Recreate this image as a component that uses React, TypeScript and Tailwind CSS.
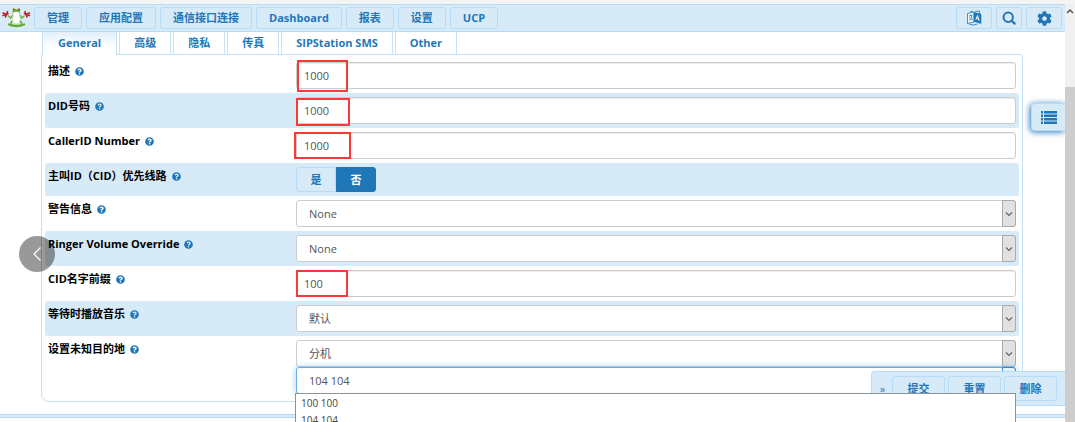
import React, { useState } from "react";
import { FaCog, FaQuestionCircle } from "react-icons/fa";

const menuItems = ["管理", "应用配置", "通信接口连接", "Dashboard", "报表", "设置", "UCP"];

const tabs = ["General", "高级", "隐私", "传真", "SIPStation SMS", "Other"];

const FrogLogo = () => (
  <svg viewBox="0 0 32 20" className="h-5 w-8" aria-hidden="true">
    <g stroke="#c4232a" strokeWidth="1.6" strokeLinecap="round" fill="none">
      <path d="M6.500 6.500L3 5M6.500 6.500L7.500 3.500M6.500 6.500L3 7.500M6.500 6.500L5.500 9M6.500 6.500L8 5.500" />
      <path d="M26 6.500L29.500 5M26 6.500L25 3.500M26 6.500L29.500 7.500M26 6.500L27 9M26 6.500L24.500 5.500" />
    </g>
    <g stroke="#6aa832" fill="none" strokeLinecap="round">
      <path d="M8.500 8L10.500 10L13 7M24 8L22 10L19.500 7" strokeWidth="1.3" />
      <path d="M12.500 13Q10 14.500 11.500 16.500M20 13Q22.500 14.500 21 16.500" strokeWidth="1.5" />
      <path d="M9 16.500Q16.500 19.500 24 16.500" strokeWidth="2.4" />
    </g>
    <path
      d="M13.500 3Q16.500 1.500 19 3L19.500 7Q21.500 12 19 15Q16.500 17 13.500 15Q11 12 13 7Z"
      fill="#fff"
      stroke="#a9cf85"
      strokeWidth="0.6"
    />
    <path d="M12.500 5Q12.500 1.500 16.300 1.500Q20 1.500 20 5Q16.300 2.500 12.500 5Z" fill="#6aa832" />
    <circle cx="14" cy="1.800" r="1.500" fill="#6aa832" />
    <circle cx="18.800" cy="1.800" r="1.500" fill="#6aa832" />
    <circle cx="13.800" cy="1.600" r="0.800" fill="#c4232a" />
    <circle cx="19" cy="1.600" r="0.800" fill="#c4232a" />
  </svg>
);

const LanguageIcon = () => (
  <svg viewBox="0 0 16 16" className="h-4 w-4" fill="none" stroke="#1f77b8" aria-hidden="true">
    <path d="M1.500 3.500L8 2V12L1.500 13.500Z" strokeWidth="0.8" fill="#eef6fc" />
    <path d="M3 6L6.500 5.500M4.700 4.500V6M6 6Q5.500 9 3 10.500M3.500 7.500Q5 9.500 6.800 9.500" strokeWidth="0.8" />
    <path d="M8 2.500L15 4V13.500L8 11.500Z" fill="#1f77b8" strokeWidth="0.6" />
    <path d="M9.800 9.800L11.500 5.500L13.200 10.800M10.400 8.500L12.600 9.200" stroke="#fff" strokeWidth="1" />
    <path d="M4 2Q5 1 7 1.500M9 1.500L13.500 1V3.500M3 14Q7 16 11.500 14" strokeWidth="0.8" />
  </svg>
);

const SearchIcon = () => (
  <svg viewBox="0 0 14 14" className="h-[14px] w-[14px]" fill="none" stroke="#1f77b8" aria-hidden="true">
    <circle cx="6.200" cy="6.200" r="4.700" strokeWidth="2" />
    <path d="M9.800 9.800L12.600 12.600" strokeWidth="2.200" strokeLinecap="round" />
  </svg>
);

const ListIcon = () => (
  <svg viewBox="0 0 16 13" className="h-[13px] w-4" fill="#1f77b8" aria-hidden="true">
    <path d="M0 0h2v2.500H0zM3 0h13v2.500H3zM0 3.500h2V6H0zM3 3.500h13V6H3zM0 7h2v2.500H0zM3 7h13v2.500H3zM0 10.500h2V13H0zM3 10.500h13V13H3z" />
  </svg>
);

const Chevron = () => (
  <svg viewBox="0 0 8 6" className="h-[6px] w-2" fill="none" stroke="#666" aria-hidden="true">
    <path d="M1 1.500L4 4.500L7 1.500" strokeWidth="1.200" />
  </svg>
);

interface RowProps {
  label: string;
  id: string;
  striped?: boolean;
  children: React.ReactNode;
}

const Row = ({ label, id, striped, children }: RowProps) => (
  <div className={`flex rounded-[3px] py-1 px-[3px] ${striped ? "bg-[#d7eaf8]" : ""}`}>
    <div className="flex h-[18px] w-[248px] shrink-0 items-center gap-[5px]">
      <label htmlFor={id} className="font-bold text-black">
        {label}
      </label>
      <FaQuestionCircle className="h-[9px] w-[9px] text-[#1f77b8]" />
    </div>
    <div className="relative min-w-0 flex-1">{children}</div>
  </div>
);

interface TextFieldProps {
  id: string;
  value: string;
  mark: string;
}

const TextField = ({ id, value, mark }: TextFieldProps) => (
  <>
    <input
      id={id}
      type="text"
      defaultValue={value}
      className="block h-[27px] w-full rounded-[3px] border border-[#ccc] bg-white px-[7px] text-[#555] shadow-[inset_0_1px_1px_rgba(0,0,0,0.08)] outline-none"
    />
    <span className={`pointer-events-none absolute border-2 border-[#f93838] ${mark}`} />
  </>
);

interface SelectFieldProps {
  id: string;
  options: string[];
  value: string;
  focused?: boolean;
}

const SelectField = ({ id, options, value, focused }: SelectFieldProps) => (
  <div className="relative">
    <select
      id={id}
      aria-label={id}
      defaultValue={value}
      className={`block h-[27px] w-full appearance-none rounded-[3px] border bg-white px-3 text-[#555] outline-none ${
        focused ? "border-[#66afe9] shadow-[0_0_6px_rgba(102,175,233,0.6)]" : "border-[#ccc]"
      }`}
    >
      {options.map((option) => (
        <option key={option}>{option}</option>
      ))}
    </select>
    <span
      className={`pointer-events-none absolute inset-y-0 right-0 flex w-[14px] items-center justify-center rounded-r-[3px] border ${
        focused ? "border-[#2a8ae0] bg-[#e5f1fb]" : "border-[#aaa] bg-[#e1e1e1]"
      }`}
    >
      <Chevron />
    </span>
  </div>
);

const NavBar = () => (
  <header className="flex h-7 items-center justify-between border-y border-[#b8dcf5] bg-[#d7eaf8] pr-[3px]">
    <div className="flex items-center">
      <a href="#home" aria-label="Home" className="mr-[2px] block">
        <FrogLogo />
      </a>
      <nav className="flex gap-1">
        {menuItems.map((item) => (
          <button
            key={item}
            type="button"
            className="h-[22px] rounded-[3px] border border-[#b8dcf5] px-3 font-bold text-[#1f77b8]"
          >
            {item}
          </button>
        ))}
      </nav>
    </div>
    <div className="flex gap-1">
      <button
        type="button"
        aria-label="Language"
        className="flex h-[22px] w-9 items-center justify-center rounded-[3px] border border-[#b8dcf5]"
      >
        <LanguageIcon />
      </button>
      <button
        type="button"
        aria-label="Search"
        className="flex h-[22px] w-[26px] items-center justify-center rounded-[3px] border border-[#b8dcf5]"
      >
        <SearchIcon />
      </button>
      <button
        type="button"
        aria-label="Settings"
        className="flex h-[22px] w-9 items-center justify-center rounded-[3px] border border-[#b8dcf5]"
      >
        <FaCog className="h-[15px] w-[15px] text-[#1f77b8]" />
      </button>
    </div>
  </header>
);

const PriorityToggle = () => {
  const [value, setValue] = useState("否");

  return (
    <div className="flex">
      {["是", "否"].map((option, i) => (
        <label
          key={option}
          className={`flex h-[25px] w-10 items-center justify-center border font-bold ${
            i === 0 ? "rounded-l-[3px]" : "rounded-r-[3px]"
          } ${
            value === option
              ? "border-[#1f77b8] bg-[#1f77b8] text-white"
              : "border-[#b8dcf5] bg-[#d7eaf8] text-[#1f77b8]"
          }`}
        >
          <input
            id={i === 0 ? "priority" : "priority-no"}
            type="radio"
            name="priority"
            checked={value === option}
            onChange={() => setValue(option)}
            className="sr-only"
          />
          {option}
        </label>
      ))}
    </div>
  );
};

const ActionBar = () => (
  <div className="absolute bottom-4 right-0 z-10 flex items-center gap-[3px] rounded-l-[4px] border border-r-0 border-[#b8dcf5] bg-[#d7eaf8] py-1 pl-[6px] pr-2">
    <button type="button" className="mr-[2px] w-[9px] text-[#1f77b8]">
      »
    </button>
    {["提交", "重置", "删除"].map((action) => (
      <button
        key={action}
        type="button"
        className="h-[25px] w-[53px] rounded-[3px] border border-[#b8dcf5] font-bold text-[#1f77b8]"
      >
        {action}
      </button>
    ))}
  </div>
);

export default function App() {
  return (
    <div className="flex h-screen flex-col overflow-hidden bg-white font-['Open_Sans','Noto_Sans_CJK_SC',sans-serif] text-[11px] leading-4">
      <div className="h-1 shrink-0 bg-[#f4f4f4]" />
      <div className="flex min-h-0 flex-1">
        <div className="relative min-w-0 flex-1 overflow-hidden">
          <NavBar />

          <main className="pl-[41px] pr-[42px]">
            <div role="tablist" className="flex gap-[2px] pl-[1px]">
              {tabs.map((tab, i) => (
                <button
                  key={tab}
                  type="button"
                  role="tab"
                  aria-selected={i === 0}
                  className={`border-x border-[#c5e1f5] font-bold text-[#1f77b8] ${
                    i === 0
                      ? "relative z-10 -mb-px h-[23px] bg-linear-to-b from-[#e0effa] to-white to-60% px-[15px] pb-[2px]"
                      : "h-[22px] bg-white px-[14px]"
                  }`}
                >
                  {tab}
                </button>
              ))}
            </div>

            <form className="rounded-b-[8px] rounded-tr-[3px] border border-[#c5e1f5] p-[3px]">
              <Row id="description" label="描述">
                <TextField id="description" value="1000" mark="left-[1px] -top-[2px] h-8 w-[51px]" />
              </Row>
              <Row id="did" label="DID号码" striped>
                <TextField id="did" value="1000" mark="left-0 top-[1px] h-7 w-[54px]" />
              </Row>
              <Row id="callerid" label="CallerID Number">
                <TextField id="callerid" value="1000" mark="-left-[2px] top-0 h-[27px] w-[57px]" />
              </Row>
              <Row id="priority" label="主叫ID（CID）优先线路" striped>
                <PriorityToggle />
              </Row>
              <Row id="alert" label="警告信息">
                <SelectField id="alert" value="None" options={["None"]} />
              </Row>
              <Row id="ringer" label="Ringer Volume Override" striped>
                <SelectField id="ringer" value="None" options={["None"]} />
              </Row>
              <Row id="prefix" label="CID名字前缀">
                <TextField id="prefix" value="100" mark="left-0 top-0 h-[27px] w-[52px]" />
              </Row>
              <Row id="music" label="等待时播放音乐" striped>
                <SelectField id="music" value="默认" options={["默认"]} />
              </Row>
              <Row id="destination" label="设置未知目的地">
                <SelectField id="destination" value="分机" options={["分机"]} />
                <SelectField id="extension" value="104 104" options={["100 100", "104 104"]} focused />
                <ul
                  role="listbox"
                  aria-label="extension"
                  className="absolute -left-px right-0 top-[53px] z-20 border border-[#8c9399] bg-white px-[5px] pt-[1px] text-[10px] text-[#444]"
                >
                  <li role="option" className="h-[17px]">100 100</li>
                  <li role="option" className="h-[17px]">104 104</li>
                </ul>
              </Row>
            </form>
          </main>

          <footer className="mt-3 h-1 border-y border-[#b8dcf5] bg-[#d7eaf8]" />

          <button
            type="button"
            aria-label="List"
            className="absolute right-0 top-[99px] flex h-7 w-[34px] items-center justify-center rounded-l-[4px] border border-r-0 border-[#b8dcf5] bg-[#d7eaf8] shadow-[-1px_1px_6px_#1f77b8]"
          >
            <ListIcon />
          </button>
          <button
            type="button"
            aria-label="Previous"
            className="absolute left-[19px] top-[232px] z-10 flex h-9 w-9 items-center justify-center rounded-full bg-black/40"
          >
            <svg viewBox="0 0 10 16" className="h-4 w-[10px]" fill="none" stroke="#fff">
              <path d="M8.500 1.500L2 8L8.500 14.500" strokeWidth="1.200" />
            </svg>
          </button>
          <ActionBar />
        </div>

        <div className="flex w-[10px] shrink-0 flex-col items-center bg-[#f0f0f0]">
          <div className="flex h-[83px] shrink-0 pt-1">
            <svg viewBox="0 0 8 6" className="h-[6px] w-2" fill="none" stroke="#555">
              <path d="M1 5L4 2L7 5" strokeWidth="1.500" />
            </svg>
          </div>
          <div className="w-full flex-1 bg-[#cdcdcd]" />
        </div>
      </div>
    </div>
  );
}
